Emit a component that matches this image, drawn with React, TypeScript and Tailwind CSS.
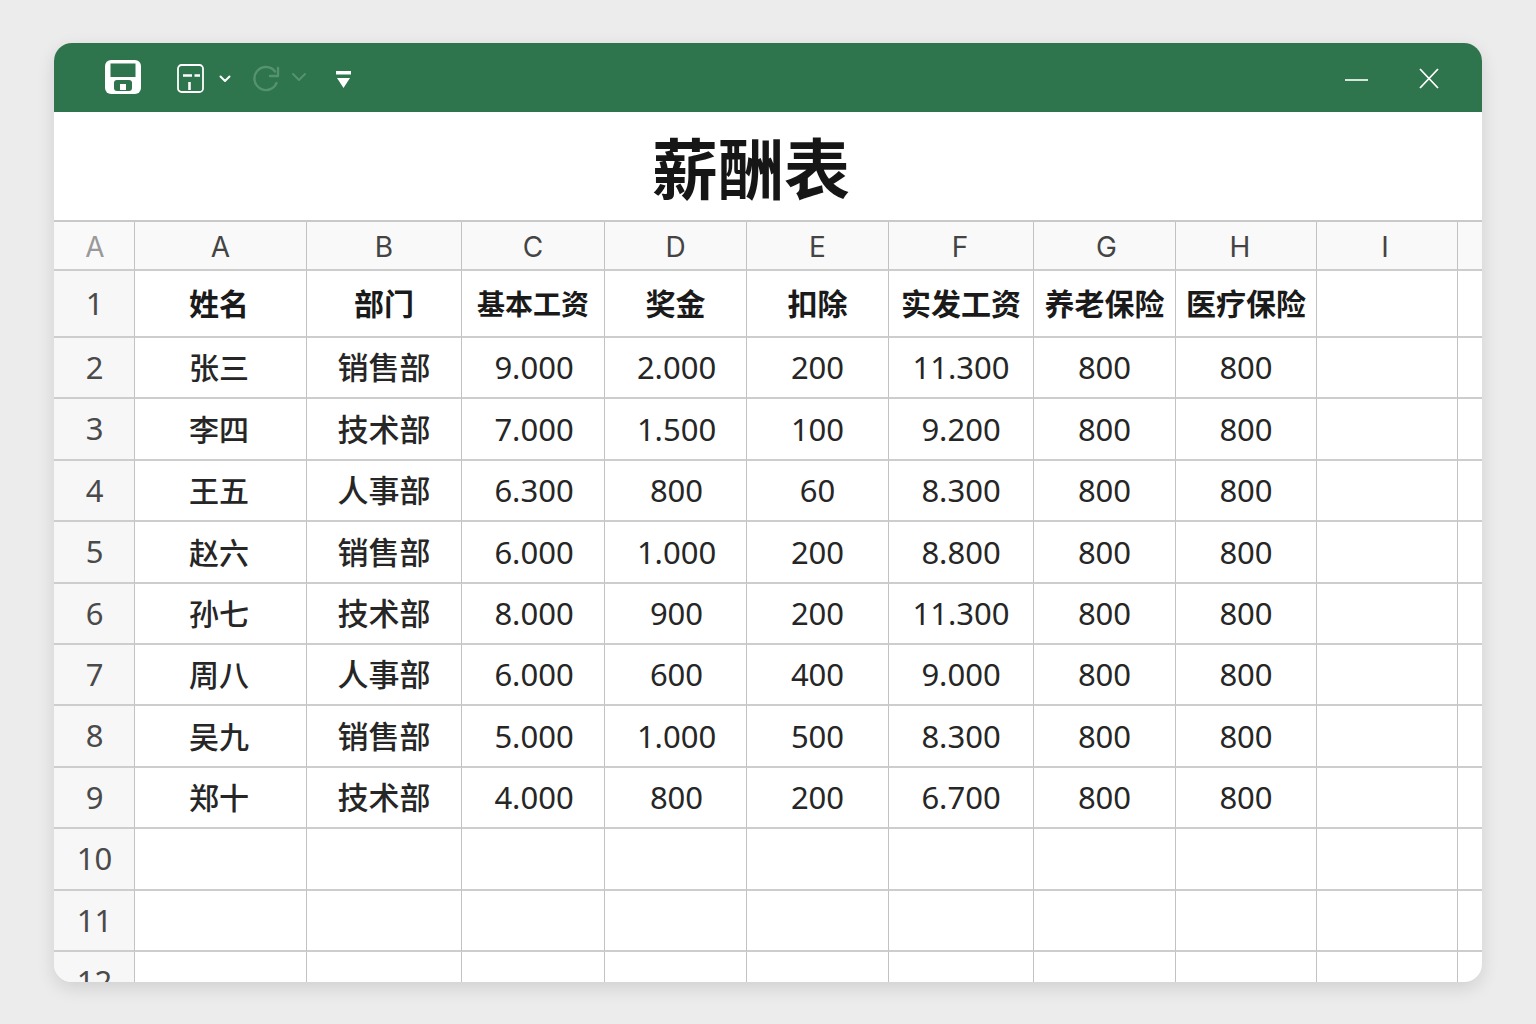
const columns = ["A", "A", "B", "C", "D", "E", "F", "G", "H", "I", ""];

const headers = ["姓名", "部门", "基本工资", "奖金", "扣除", "实发工资", "养老保险", "医疗保险"];

const people = [
  ["张三", "销售部", "9.000", "2.000", "200", "11.300", "800", "800"],
  ["李四", "技术部", "7.000", "1.500", "100", "9.200", "800", "800"],
  ["王五", "人事部", "6.300", "800", "60", "8.300", "800", "800"],
  ["赵六", "销售部", "6.000", "1.000", "200", "8.800", "800", "800"],
  ["孙七", "技术部", "8.000", "900", "200", "11.300", "800", "800"],
  ["周八", "人事部", "6.000", "600", "400", "9.000", "800", "800"],
  ["吴九", "销售部", "5.000", "1.000", "500", "8.300", "800", "800"],
  ["郑十", "技术部", "4.000", "800", "200", "6.700", "800", "800"],
];

const emptyRows = [10, 11, 12];
const spare = ["", "", "", "", "", "", "", ""];

// small per-column nudges for the letter headers
const columnNudge: Record<string, string> = {
  F: "pr-[2px]",
  G: "pl-[4px]",
  H: "pr-[12px]",
  I: "pr-[4px]",
};

const Chevron = ({ faded = false }: { faded?: boolean }) => (
  <svg width="16" height="10" viewBox="0 0 16 10" fill="none" stroke={faded ? "#55936e" : "#ffffff"} strokeWidth="2" strokeLinecap="round" strokeLinejoin="round">
    <path d={faded ? "M2 2 8 8 14 2" : "M3.5 2.5 8 7 12.5 2.5"} />
  </svg>
);

const RowCells = ({ label, cells, bold = false }: { label: number; cells: string[]; bold?: boolean }) => (
  <>
    <div className="flex h-full items-center justify-center border-r border-b-2 border-r-[#c2c2c2] border-b-[#cdcdcd] bg-[#f7f7f7] pb-[1px] pl-[1px] text-[31px] text-[#4a4a4a]">
      {label}
    </div>
    {cells.map((cell, i) => (
      <div
        key={i}
        className={`flex h-full items-center justify-center border-r border-b-2 border-r-[#c2c2c2] border-b-[#cdcdcd] ${
          bold ? "font-semibold text-[#1a1a1a]" : "text-[#262626]"
        } ${bold && i === 2 ? "text-[28px]" : bold || i === 0 ? "text-[30px]" : "text-[31px]"} ${
          i === 0 ? "pr-[3px]" : ""
        } ${!bold && i < 2 ? "font-medium" : ""} ${!bold && i >= 2 && i < 4 ? "pl-[2px]" : ""}`}
      >
        {cell}
      </div>
    ))}
    <div className="border-r border-b-2 border-r-[#c2c2c2] border-b-[#cdcdcd]"></div>
    <div className="border-b-2 border-b-[#cdcdcd]"></div>
  </>
);

export default function App() {
  return (
    <div
      className="h-screen overflow-hidden bg-[#ececec] pt-[43px] pl-[54px]"
      style={{ fontFamily: '"Noto Sans", "Noto Sans CJK SC", sans-serif' }}
    >
      <div className="flex h-[939px] w-[1428px] flex-col overflow-hidden rounded-[18px] bg-white shadow-[0_6px_18px_rgba(0,0,0,0.12)]">
        {/* Title bar */}
        <div className="flex h-[69px] shrink-0 items-center bg-[#2e744c] pl-[51px] pr-[43px]">
          <svg width="36" height="34" viewBox="0 0 36 34" className="mb-[1px]">
            <rect x="0" y="0" width="36" height="34" rx="6" fill="#ffffff" />
            <rect x="5.5" y="3.5" width="25" height="13.5" fill="#2e744c" />
            <rect x="9" y="20" width="18" height="11" rx="3" fill="#2e744c" />
            <rect x="15" y="24" width="6" height="6" fill="#ffffff" />
          </svg>
          <svg width="28" height="29" viewBox="0 0 28 29" fill="none" stroke="#ffffff" className="ml-[36px] mt-[2px]">
            <rect x="1" y="1" width="25" height="27" rx="3.5" strokeWidth="1.8" />
            <path d="M6 11.5H15M17.5 11.5H23M12.5 18V26" strokeWidth="2.6" />
          </svg>
          <div className="ml-[12px] mt-[2px]">
            <Chevron />
          </div>
          <svg width="28" height="28" viewBox="0 0 28 28" fill="none" stroke="#55936e" strokeWidth="2.4" strokeLinecap="round" strokeLinejoin="round" className="ml-[20px] mt-[1px]">
            <path d="M22 7.5A11.5 11.5 0 1 0 23.5 19" />
            <path d="M25 4V12H17" />
          </svg>
          <div className="ml-[10px] mb-[1px]">
            <Chevron faded />
          </div>
          <svg width="15" height="18" viewBox="0 0 15 18" className="ml-[29px] mt-[4px]">
            <rect x="0" y="0" width="15" height="3.5" fill="#ffffff" />
            <path d="M1 7H14L7.5 17Z" fill="#ffffff" />
          </svg>
          <div className="ml-auto flex items-center gap-[51px]">
            <div className="mt-[4px] h-[2px] w-[23px] bg-[#d4e6da]"></div>
            <svg width="20" height="21" viewBox="0 0 20 21" fill="none" stroke="#ffffff" strokeWidth="1.8" className="mt-[1px]">
              <path d="M1 1 19 20M19 1 1 20" />
            </svg>
          </div>
        </div>

        {/* Sheet title */}
        <div className="flex h-[108px] shrink-0 items-center justify-center pt-[3px] pr-[34px] text-[66px] font-bold leading-none text-[#161616]">
          薪酬表
        </div>

        {/* Sheet */}
        <div className="grid grid-cols-[81px_172px_155px_143px_142px_142px_145px_142px_141px_141px_24px] grid-rows-[49px_67px_61px_62px_61px_62px_61px_61px_62px_61px_62px_61px_61px] border-t-2 border-[#c9c9c9]">
          {columns.map((col, i) => (
            <div
              key={i}
              className={`flex items-center justify-center border-b-2 border-b-[#cdcdcd] bg-[#f9f9f9] pt-[2px] font-[Inter] text-[28px] ${
                i < 10 ? "border-r border-r-[#c2c2c2]" : ""
              } ${i === 0 ? "pl-[2px] text-[#999999]" : "text-[#444444]"} ${columnNudge[col] ?? ""}`}
            >
              {col}
            </div>
          ))}
          <RowCells label={1} cells={headers} bold />
          {people.map((row, i) => (
            <RowCells key={i} label={i + 2} cells={row} />
          ))}
          {emptyRows.map((n) => (
            <RowCells key={n} label={n} cells={spare} />
          ))}
        </div>
      </div>
    </div>
  );
}
